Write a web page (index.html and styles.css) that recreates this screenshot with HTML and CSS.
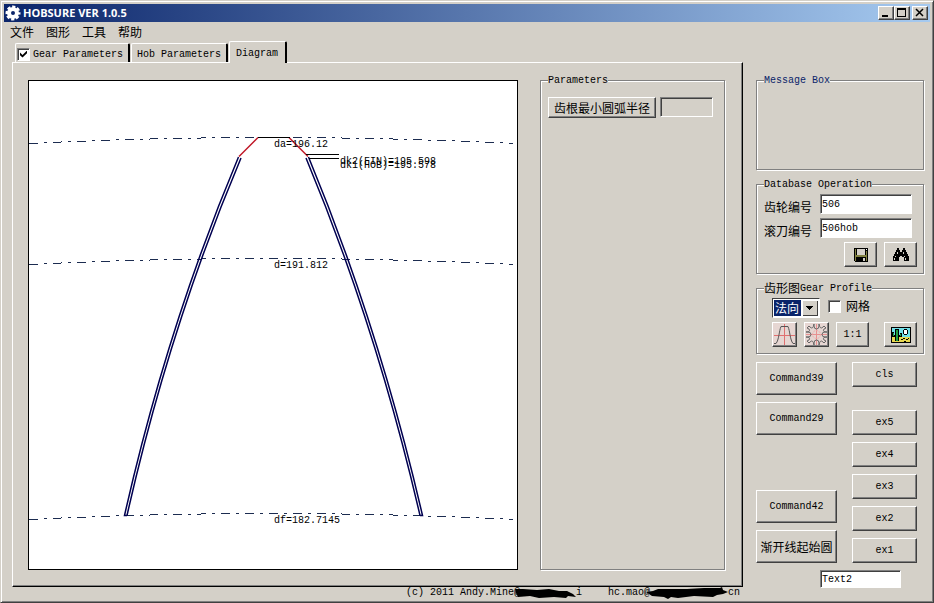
FILE: index.html
```html
<!DOCTYPE html>
<html lang="zh-CN">
<head>
  <meta charset="UTF-8">
  <meta name="viewport" content="width=device-width, initial-scale=1.0">
  <title>HOBSURE VER 1.0.5</title>
  <link rel="stylesheet" href="styles.css">
</head>
<body>
  <div class="window">
    <header class="titlebar">
      <svg class="app-icon" width="16" height="16" viewBox="0 0 16 16">
        <circle cx="8" cy="8" r="4" fill="none" stroke="#fff" stroke-width="4"/>
        <circle cx="8" cy="8" r="6" fill="none" stroke="#fff" stroke-width="3" stroke-dasharray="3 1.71" stroke-dashoffset="1.5"/>
      </svg>
      <h1>HOBSURE VER 1.0.5</h1>
      <div class="window-buttons">
        <button class="win-btn" aria-label="Minimize"><svg width="12" height="10" viewBox="0 0 12 10"><path d="M2 7h6v2H2z"/></svg></button>
        <button class="win-btn" aria-label="Maximize"><svg width="12" height="10" viewBox="0 0 12 10"><path d="M1 0h9v9H1zM2 2v6h7V2z" fill-rule="evenodd"/></svg></button>
        <button class="win-btn close" aria-label="Close"><svg width="12" height="10" viewBox="0 0 12 10"><path d="M2 1l7 7M9 1L2 8" stroke="#000" stroke-width="1.500"/></svg></button>
      </div>
    </header>

    <nav class="menubar">
      <button>文件</button>
      <button>图形</button>
      <button>工具</button>
      <button>帮助</button>
    </nav>

    <div class="workspace">
      <main>
        <div class="tabs">
          <div class="tab with-check">
            <input type="checkbox" class="check" id="gearOn" aria-label="Gear Parameters" checked>
            <button>Gear Parameters</button>
          </div>
          <div class="tab"><button>Hob Parameters</button></div>
          <div class="tab active"><button>Diagram</button></div>
        </div>

        <div class="panel">
          <svg class="diagram" viewBox="0 0 488 488">
            <!-- tip, pitch and root circles -->
            <g class="circles">
              <path d="M0 62.500Q243 50.500 484 62.500"/>
              <path d="M0 183.500Q243 171.500 484 183.500"/>
              <path d="M0 438.500Q243 426.500 484 438.500"/>
            </g>
            <!-- flanks -->
            <g class="flank">
              <path d="M209.500 76Q138 246 95.500 434.500H98M212 77Q140.500 246 98 434.500"/>
              <path d="M279.500 76Q350 246 393.500 434.500H391M277 77Q347.500 246 391 434.500"/>
            </g>
            <path class="chamfer" d="M210 75.500L229 56.500M260 56.500L279 75.500"/>
            <path class="leader" d="M229 56.500H261M277 73.500H310M280 77.500H310"/>
            <text x="245" y="66">da=196.12</text>
            <text x="311" y="83">dk2(FIN)=195.598</text>
            <text x="311" y="87">dk1(HOB)=195.578</text>
            <text x="245" y="187">d=191.812</text>
            <text x="245" y="442">df=182.7145</text>
          </svg>

          <fieldset class="params">
            <legend>Parameters</legend>
            <div class="param-row">
              <button class="btn cjk">齿根最小圆弧半径</button>
              <input type="text" class="field readout" aria-label="齿根最小圆弧半径" readonly>
            </div>
          </fieldset>
        </div>

        <footer>
          <span class="credit">(c) 2011 Andy.Mine@<svg class="scribble" width="62" height="12" viewBox="0 0 62 12"><path d="M1 2l8 0 14 1 12-1 10 2 8 0 6 3 3 3-8-1-2 2-12-1-15 1-9-2-12 1-2-4z"/></svg>i</span>
          <span class="credit">hc.mao@<svg class="scribble wide" width="84" height="12" viewBox="0 0 84 12"><path d="M2 5l7-1 5-2 12 0 17 0 17-1 16 0 2-1 1 3 5 2-5 2-6 1-4 2-19-1-16 2-7-1-3 2-4-2-12-1z"/></svg>cn</span>
        </footer>
      </main>

      <aside>
        <fieldset class="message">
          <legend>Message Box</legend>
        </fieldset>

        <fieldset class="database">
          <legend>Database Operation</legend>
          <div class="db-row">
            <label for="gearNo">齿轮编号</label>
            <input type="text" class="field" id="gearNo" value="506">
          </div>
          <div class="db-row">
            <label for="hobNo">滚刀编号</label>
            <input type="text" class="field" id="hobNo" value="506hob">
          </div>
          <div class="db-actions">
            <button class="btn" aria-label="Save">
              <svg width="16" height="16" viewBox="0 0 16 16" shape-rendering="crispEdges">
                <path d="M1 1h14v14H2l-1-1z"/>
                <path d="M2 2h1v12H2zM13 4h1v10h-1zM3 8h10v2H3z" fill="#808040"/>
                <path d="M4 2h8v6H4zM10 11h2v3h-2z" fill="#d4d0c8"/>
                <path d="M13 2h1v1h-1z" fill="#fff"/>
              </svg>
            </button>
            <button class="btn" aria-label="Find">
              <svg width="16" height="16" viewBox="0 0 16 16" shape-rendering="crispEdges">
                <path d="M4 1h2v2h1v2h2V3h1V1h2v2h1v2h1v2h1v2h1v5h-5v-4H9v-1H7v1H6v4H0V9h1V7h1V5h1V3h1z"/>
                <path d="M4 5h1v2H4zM10 5h1v2h-1zM2 9h1v1H2zM11 9h1v1h-1zM1 11h1v2H1zM12 11h1v2h-1z" fill="#d4d0c8"/>
              </svg>
            </button>
          </div>
        </fieldset>

        <fieldset class="profile">
          <legend><span class="cjk">齿形图</span>Gear Profile</legend>
          <div class="view-row">
            <div class="combo">
              <select aria-label="齿形图">
                <option>法向</option>
                <option>端面</option>
              </select>
              <svg class="combo-arrow" width="16" height="16" viewBox="0 0 16 16" shape-rendering="crispEdges"><path d="M4 6h7v1h-1v1H9v1H8v1H7V9H6V8H5V7H4z"/></svg>
            </div>
            <input type="checkbox" class="check" id="grid">
            <label for="grid">网格</label>
          </div>
          <div class="tool-row">
            <button class="btn tool" aria-label="Tooth">
              <svg width="23" height="23" viewBox="0 0 23 23" fill="none">
                <path d="M1 12.500h21M11.500 1v21" stroke="#e07070"/>
                <path d="M1 20.500h2C6 17 6 8 8 3.500h7c2 4.500 2 13.500 5 17h2" stroke="#555"/>
              </svg>
            </button>
            <button class="btn tool" aria-label="Gear">
              <svg width="23" height="23" viewBox="0 0 23 23" fill="none">
                <path d="M1 11.500h21M11.500 1v21" stroke="#e89090"/>
                <circle cx="11.500" cy="11.500" r="4" stroke="#f0a8a8" stroke-dasharray="2 1"/>
                <path d="M9 1v2q0 3 2.500 3T14 3V1M9 1Q8 7 5 4L4 3 2 5l2 1q2 3-3 3M14 1q1 6 4 3l1-1 2 2-2 1q-2 3 3 3M1 9h2q3 0 3 2.500T3 14H1M22 9h-2q-3 0-3 2.500t3 2.500h2M1 14q5 0 3 3l-2 1 2 2 1-1q3-3 4 3M22 14q-5 0-3 3l2 1-2 2-1-1q-3-3-4 3M9 22v-2q0-3 2.500-3t2.500 3v2" stroke="#666"/>
              </svg>
            </button>
            <button class="btn ratio">1:1</button>
            <button class="btn picture" aria-label="Picture">
              <svg width="20" height="16" viewBox="0 0 20 16" shape-rendering="crispEdges">
                <path d="M0 0h20v16H0z"/>
                <path d="M1 1h18v9H1z" fill="#70e0e8"/>
                <path d="M1 10h18v5H1z" fill="#e8d850"/>
                <path d="M1 5h2v3h1V2h4v6h1V6h2v4H8v4H4v-4H1z"/>
                <path d="M5 3h2v11H5zM2 6h1v3H2zM9 7h1v2H9z" fill="#20a040"/>
                <circle cx="14.500" cy="5" r="2.500" fill="#fff" stroke="#000"/>
                <path d="M10 12h2v1h-2zM12 11h2v1h-2zM15 12h2v1h-2zM13 14h2v1h-2zM17 11h1v1h-1z"/>
              </svg>
            </button>
          </div>
        </fieldset>

        <div class="commands">
          <div class="command-col">
            <button class="btn">Command39</button>
            <button class="btn">Command29</button>
            <button class="btn spaced">Command42</button>
            <button class="btn cjk">渐开线起始圆</button>
          </div>
          <div class="ex-col">
            <button class="btn cls">cls</button>
            <button class="btn">ex5</button>
            <button class="btn">ex4</button>
            <button class="btn">ex3</button>
            <button class="btn">ex2</button>
            <button class="btn">ex1</button>
          </div>
        </div>
        <input type="text" class="field text2" aria-label="Text2" value="Text2">
      </aside>
    </div>
  </div>
</body>
</html>
```
FILE: styles.css
```css
* {
  box-sizing: border-box;
}
body {
  margin: 0;
  background: #d4d0c8;
  color: #000;
  font: 10px/12px "Liberation Mono", "Noto Sans CJK SC", monospace;
}
button, input, select {
  font: inherit;
  color: inherit;
  margin: 0;
}
button {
  background: none;
  border: 0;
  padding: 0;
  white-space: nowrap;
}
svg {
  display: block;
}
label, .cjk, .menubar, select {
  font-family: "Noto Sans CJK SC", sans-serif;
  font-size: 12px;
}

/* window frame */
.window {
  min-height: 100vh;
  padding: 2px;
  border: 1px solid #d4d0c8;
  border-right-color: #404040;
  border-bottom-color: #404040;
  box-shadow: inset 1px 1px 0 #fff, inset -1px -1px 0 #808080;
}
.titlebar {
  display: flex;
  align-items: center;
  height: 18px;
  margin: 1px;
  padding: 0 2px 0 1px;
  background: linear-gradient(to right, #0a246a, #a6caf0);
}
.titlebar h1 {
  flex: 1;
  margin: 0 0 0 2px;
  color: #fff;
  font: bold 11px/16px "Open Sans", sans-serif;
}
.window-buttons {
  display: flex;
}
.win-btn {
  width: 16px;
  height: 14px;
  padding: 1px;
  background: #d4d0c8;
  border: 1px solid;
  border-color: #fff #404040 #404040 #fff;
  box-shadow: inset -1px -1px 0 #808080;
}
.win-btn.close {
  margin-left: 2px;
}
.menubar {
  display: flex;
  gap: 12px;
  padding: 0 7px;
}
.menubar button {
  height: 18px;
  line-height: 18px;
}

/* main area */
.workspace {
  display: grid;
  grid-template-columns: minmax(0, 1fr) 168px;
  gap: 13px;
  padding: 0 7px 0 9px;
}
.tabs {
  display: flex;
  align-items: flex-end;
  gap: 1px;
  height: 21px;
  padding-left: 3px;
}
.tab {
  display: flex;
  align-items: center;
  height: 19px;
  padding: 2px 5px 0 5px;
  border: 1px solid #fff;
  border-right: 2px solid #000;
  border-bottom: 0;
  border-radius: 2px 2px 0 0;
}
.tab button {
  padding-top: 2px;
}
.tab.with-check {
  padding-left: 1px;
  gap: 3px;
}
.tab.active {
  height: 22px;
  margin: 0 0 -1px;
  padding: 0 7px 0 6px;
  background: #d4d0c8;
}
.panel {
  display: grid;
  grid-template-columns: minmax(0, 1fr) 185px;
  gap: 22px;
  padding: 17px 17px 16px 15px;
  border: 1px solid #fff;
  border-right-color: #000;
  border-bottom-color: #000;
  box-shadow: inset -1px -1px 0 #808080;
}
.diagram {
  width: 100%;
  background: #fff;
  border: 1px solid #000;
}
.diagram text {
  font-size: 10px;
}
.diagram path {
  fill: none;
}
.circles, .leader {
  shape-rendering: crispEdges;
}
.circles {
  stroke: #1c2c50;
  stroke-dasharray: 9 6 3 6;
}
.flank {
  stroke: #000050;
  stroke-width: 1.5;
}
.chamfer {
  stroke: #c01828;
  stroke-width: 1.5;
}
.leader {
  stroke: #000;
}

/* group boxes */
fieldset {
  min-width: 0;
  margin: 0;
  padding: 0 7px;
  border: 1px solid #808080;
  box-shadow: 1px 1px 0 #fff, inset 1px 1px 0 #fff;
}
legend {
  height: 12px;
  padding: 0;
  line-height: 14px;
  background: #d4d0c8;
}
.params {
  margin-top: -6px;
}
.param-row {
  display: flex;
  gap: 4px;
  padding-top: 11px;
}
.param-row .btn {
  width: 108px;
  height: 21px;
}
.param-row .field {
  width: 53px;
}

/* controls */
.btn {
  display: flex;
  align-items: center;
  justify-content: center;
  background: #d4d0c8;
  border: 1px solid;
  border-color: #fff #404040 #404040 #fff;
  box-shadow: inset -1px -1px 0 #808080;
}
.field {
  min-width: 0;
  height: 20px;
  padding: 0 1px;
  background: #fff;
  border: 1px solid;
  border-color: #808080 #fff #fff #808080;
  border-radius: 0;
  box-shadow: inset 1px 1px 0 #404040;
}
.readout {
  background: #d4d0c8;
}
.check {
  appearance: none;
  width: 13px;
  height: 13px;
  background: #fff;
  border: 1px solid;
  border-color: #808080 #fff #fff #808080;
  box-shadow: inset 1px 1px 0 #404040;
}
.check:checked::before {
  content: "";
  display: block;
  width: 7px;
  height: 7px;
  margin: 2px;
  background: #000;
  clip-path: polygon(0 28%, 36% 64%, 100% 0, 100% 40%, 36% 100%, 0 68%);
}

/* right column */
aside {
  padding-top: 33px;
}
.message {
  height: 96px;
}
.message legend {
  color: #0a246a;
}
.database {
  height: 96px;
  margin-top: 8px;
  padding-right: 6px;
}
.db-row {
  display: grid;
  grid-template-columns: 56px 92px;
  padding-top: 4px;
}
.db-row label {
  padding-top: 7px;
}
.db-actions {
  display: flex;
  justify-content: flex-end;
  gap: 7px;
  padding-top: 4px;
}
.db-actions .btn {
  width: 33px;
  height: 25px;
}
.profile {
  height: 72px;
  margin-top: 8px;
  padding-right: 6px;
}
.profile legend {
  display: flex;
}
.profile legend .cjk {
  line-height: 12px;
}
.view-row {
  display: flex;
  padding: 4px 0 0 8px;
}
.view-row .check {
  margin: 2px 5px 0 8px;
}
.view-row label {
  padding-top: 2px;
}
.combo {
  position: relative;
}
.combo select {
  appearance: none;
  display: block;
  width: 48px;
  height: 20px;
  padding: 0 0 0 2px;
  line-height: 16px;
  color: #fff;
  background: linear-gradient(#0a246a, #0a246a) 1px 1px / 27px 16px no-repeat #fff;
  border: 1px solid;
  border-color: #404040 #fff #fff #404040;
  border-radius: 0;
}
.combo option {
  color: #000;
}
.combo-arrow {
  position: absolute;
  top: 2px;
  right: 2px;
  background: #d4d0c8;
  box-shadow: inset 1px 1px 0 #fff, inset -1px -1px 0 #404040;
  pointer-events: none;
}
.tool-row {
  display: flex;
  gap: 7px;
  padding: 4px 0 0 8px;
}
.tool-row .btn {
  width: 33px;
  height: 25px;
}
.tool-row .tool {
  width: 25px;
  background: #e6d6d2;
}
.tool-row .picture {
  margin-left: auto;
}
.commands {
  display: flex;
  gap: 15px;
  margin-top: 8px;
}
.command-col, .ex-col {
  display: flex;
  flex-direction: column;
  gap: 7px;
}
.command-col .btn {
  width: 81px;
  height: 33px;
}
.command-col .spaced {
  margin-top: 48px;
}
.ex-col .btn {
  width: 65px;
  height: 25px;
}
.ex-col .cls {
  margin-bottom: 16px;
}
.text2 {
  display: block;
  width: 81px;
  height: 18px;
  margin: 7px 0 0 64px;
}

/* credits */
footer {
  display: flex;
  justify-content: flex-end;
  gap: 26px;
  padding-right: 3px;
}
.credit {
  display: flex;
}
.scribble {
  margin-left: -6px;
}
```
